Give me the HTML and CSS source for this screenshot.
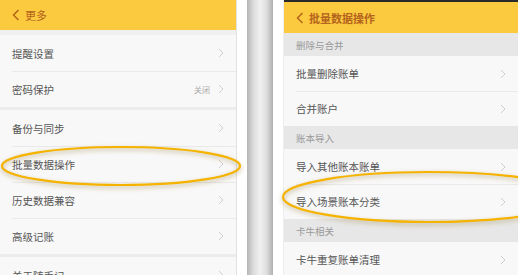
FILE: index.html
```html
<!DOCTYPE html>
<html lang="zh">
<head>
    <meta charset="UTF-8">
    <title>批量数据操作</title>
    <link rel="stylesheet" href="styles.css">
</head>
<body>

<div class="page">
    <!-- Left screen: 更多 -->
    <div class="phone phone-left">
        <header class="bar">
            <svg class="back" width="8" height="12" viewBox="0 0 8 12"><polyline points="6.5,1 1.5,6 6.5,11"/></svg>
            <span>更多</span>
        </header>
        <div class="gap gap-top"></div>
        <div class="group">
            <div class="row"><span class="label">提醒设置</span><svg class="chev" width="6" height="10" viewBox="0 0 6 10"><polyline points="1,1 5,5 1,9"/></svg></div>
            <div class="row"><span class="label">密码保护</span><span class="value">关闭</span><svg class="chev" width="6" height="10" viewBox="0 0 6 10"><polyline points="1,1 5,5 1,9"/></svg></div>
        </div>
        <div class="gap"></div>
        <div class="group">
            <div class="row"><span class="label">备份与同步</span><svg class="chev" width="6" height="10" viewBox="0 0 6 10"><polyline points="1,1 5,5 1,9"/></svg></div>
            <div class="row"><span class="label">批量数据操作</span><svg class="chev" width="6" height="10" viewBox="0 0 6 10"><polyline points="1,1 5,5 1,9"/></svg></div>
            <div class="row"><span class="label">历史数据兼容</span><svg class="chev" width="6" height="10" viewBox="0 0 6 10"><polyline points="1,1 5,5 1,9"/></svg></div>
            <div class="row"><span class="label">高级记账</span><svg class="chev" width="6" height="10" viewBox="0 0 6 10"><polyline points="1,1 5,5 1,9"/></svg></div>
        </div>
        <div class="gap"></div>
        <div class="group">
            <div class="row"><span class="label">关于随手记</span><svg class="chev" width="6" height="10" viewBox="0 0 6 10"><polyline points="1,1 5,5 1,9"/></svg></div>
        </div>
    </div>

    <!-- gutter between the two screenshots -->
    <div class="gutter"><div class="edge"></div></div>

    <!-- Right screen: 批量数据操作 -->
    <div class="phone phone-right">
        <div class="status"></div>
        <header class="bar bar-bold">
            <svg class="back" width="8" height="12" viewBox="0 0 8 12"><polyline points="6.5,1 1.5,6 6.5,11"/></svg>
            <span>批量数据操作</span>
        </header>
        <div class="section">删除与合并</div>
        <div class="group">
            <div class="row row-r"><span class="label">批量删除账单</span><svg class="chev" width="6" height="10" viewBox="0 0 6 10"><polyline points="1,1 5,5 1,9"/></svg></div>
            <div class="row row-r"><span class="label">合并账户</span><svg class="chev" width="6" height="10" viewBox="0 0 6 10"><polyline points="1,1 5,5 1,9"/></svg></div>
        </div>
        <div class="section">账本导入</div>
        <div class="group">
            <div class="row row-r"><span class="label">导入其他账本账单</span><svg class="chev" width="6" height="10" viewBox="0 0 6 10"><polyline points="1,1 5,5 1,9"/></svg></div>
            <div class="row row-r"><span class="label">导入场景账本分类</span><svg class="chev" width="6" height="10" viewBox="0 0 6 10"><polyline points="1,1 5,5 1,9"/></svg></div>
        </div>
        <div class="section">卡牛相关</div>
        <div class="group">
            <div class="row row-r"><span class="label">卡牛重复账单清理</span><svg class="chev" width="6" height="10" viewBox="0 0 6 10"><polyline points="1,1 5,5 1,9"/></svg></div>
        </div>
    </div>

    <!-- hand-drawn highlight rings -->
    <svg class="marks" width="518" height="275" viewBox="0 0 518 275">
        <defs>
            <filter id="glow" x="-10%" y="-50%" width="120%" height="200%">
                <feGaussianBlur stdDeviation="2.2"/>
            </filter>
        </defs>
        <ellipse class="shade" cx="121" cy="168" rx="119" ry="19"/>
        <ellipse class="ring" cx="121" cy="166" rx="119" ry="19"/>
        <ellipse class="shade" cx="429" cy="199" rx="146" ry="25"/>
        <ellipse class="ring" cx="429" cy="197" rx="146" ry="25"/>
    </svg>
</div>

</body>
</html>
```

FILE: styles.css
```css
body {
    margin: 0;
    background-color: #fff;
    font-family: "Noto Sans CJK SC", "Noto Sans", sans-serif;
}
.page {
    position: relative;
    width: 518px;
    height: 275px;
    overflow: hidden;
    display: flex;
}
.phone {
    background-color: #f8f8f8;
    overflow: hidden;
}
.phone-left {
    width: 236px;
    border-right: 1px solid #e2e2e2;
}
.phone-right {
    flex: 1;
    border-left: 1px solid #eee;
}
.gutter {
    width: 46px;
    padding: 0 10px 0 10px;
    box-sizing: border-box;
    background-color: #fff;
}
.gutter .edge {
    height: 100%;
    background: linear-gradient(to right, #b4b4b4, #dcdcdc 25%, #f0f0f0 50%, #dedede 75%, #b0b0b0);
}
.status {
    height: 2px;
    background-color: #2a2a2a;
}
.bar {
    height: 30px;
    background-color: #fcca3f;
    color: #b4641c;
    display: flex;
    align-items: center;
    padding-left: 12px;
    font-size: 11px;
    gap: 5px;
}
.bar-bold {
    height: 31px;
    font-weight: bold;
}
.back polyline {
    fill: none;
    stroke: #b4641c;
    stroke-width: 1.5;
}
.gap {
    height: 3px;
    background-color: #ececec;
}
.gap-top {
    height: 5px;
    background-color: #f0f0f0;
}
.section {
    height: 23px;
    background-color: #e7e7e7;
    color: #9a9a9a;
    font-size: 9.5px;
    display: flex;
    align-items: center;
    padding-left: 12px;
}
.group .row {
    height: 36px;
    display: flex;
    align-items: center;
    padding: 0 12px;
    position: relative;
    font-size: 10.5px;
    color: #555;
}
.group .row-r {
    height: 35px;
}
.group .row + .row::before {
    content: "";
    position: absolute;
    top: 0;
    left: 12px;
    right: 0;
    border-top: 1px solid #e9e9e9;
}
.row .label {
    flex: 1;
}
.row .value {
    font-size: 8px;
    color: #aaa;
    margin-right: 8px;
}
.chev polyline {
    fill: none;
    stroke: #cfcfcf;
    stroke-width: 1;
}
.marks {
    position: absolute;
    left: 0;
    top: 0;
    pointer-events: none;
}
.marks ellipse {
    fill: none;
}
.marks .ring {
    stroke: #f5b300;
    stroke-width: 2.2;
}
.marks .shade {
    stroke: rgba(140, 110, 40, 0.3);
    stroke-width: 3.5;
    filter: url(#glow);
}
```
